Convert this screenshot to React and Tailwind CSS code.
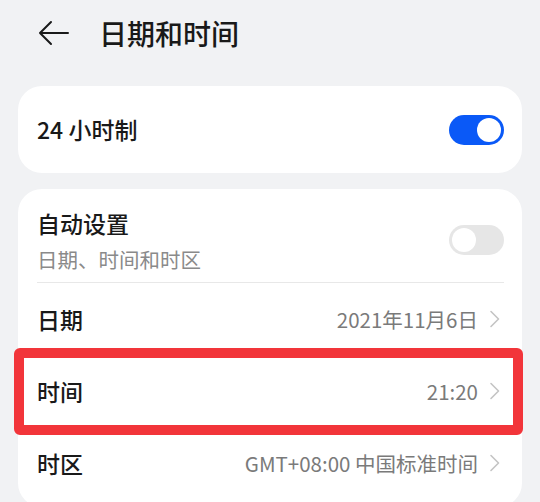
import React from "react";

const FONT = { fontFamily: '"Noto Sans CJK SC", "Noto Sans", sans-serif' };

function Toggle({ on }) {
  return (
    <div
      className={
        "w-[55px] h-[30px] rounded-full p-[3px] flex items-center " +
        (on ? "bg-[#0a59f7] justify-end" : "bg-[#e6e6e6] justify-start")
      }
    >
      <div className="w-[24px] h-[24px] rounded-full bg-white" />
    </div>
  );
}

function Chevron() {
  return (
    <svg width="12" height="18" viewBox="0 0 12 18" className="ml-[11px]">
      <path d="M2 1.5 L9.5 9 L2 16.5" fill="none" stroke="#c4c4c4" strokeWidth="1.6" strokeLinecap="round" strokeLinejoin="round" />
    </svg>
  );
}

function Row({ label, value }) {
  return (
    <div className="h-[72px] flex items-center justify-between">
      <span className="text-[23px] font-medium text-[#191919]">{label}</span>
      <div className="flex items-center">
        <span className="text-[20.5px] text-[#7a7a7a]">{value}</span>
        <Chevron />
      </div>
    </div>
  );
}

export default function App() {
  return (
    <div className="relative w-[540px] h-[502px] overflow-hidden bg-[#f1f2f4]" style={FONT}>
      {/* header */}
      <div className="h-[66px] flex items-center pl-[38px]">
        <svg width="31" height="26" viewBox="0 0 31 26">
          <path d="M13 2 L2 13 L13 24 M2 13 H30" fill="none" stroke="#1a1a1a" strokeWidth="2" strokeLinecap="round" strokeLinejoin="round" />
        </svg>
        <h1 className="ml-[30px] text-[28px] font-medium text-[#191919] leading-none">日期和时间</h1>
      </div>

      {/* 24h card */}
      <div className="mt-[20px] mx-[18px] h-[87px] rounded-[24px] bg-white flex items-center justify-between pl-[19px] pr-[18px]">
        <span className="text-[23px] font-medium text-[#191919]">24 小时制</span>
        <Toggle on />
      </div>

      {/* settings card */}
      <div className="mt-[16px] mx-[18px] rounded-[24px] bg-white pl-[19px] pr-[21px] pb-[8px]">
        <div className="flex items-center justify-between pt-[19px] pb-[10px]">
          <div className="flex flex-col gap-[8px]">
            <span className="text-[23px] leading-[30px] font-medium text-[#191919]">自动设置</span>
            <span className="text-[20.5px] leading-[26px] text-[#8a8a8a]">日期、时间和时区</span>
          </div>
          <div className="-mr-[3px]">
            <Toggle />
          </div>
        </div>
        <div className="h-px bg-[#e8e8e8] mr-[-3px]" />
        <Row label="日期" value="2021年11月6日" />
        <Row label="时间" value="21:20" />
        <Row label="时区" value="GMT+08:00 中国标准时间" />
      </div>

      {/* highlight annotation */}
      <div className="absolute left-[14px] top-[348px] w-[509px] h-[87px] border-[10px] border-[#f2353a] rounded-[6px]" />
    </div>
  );
}
